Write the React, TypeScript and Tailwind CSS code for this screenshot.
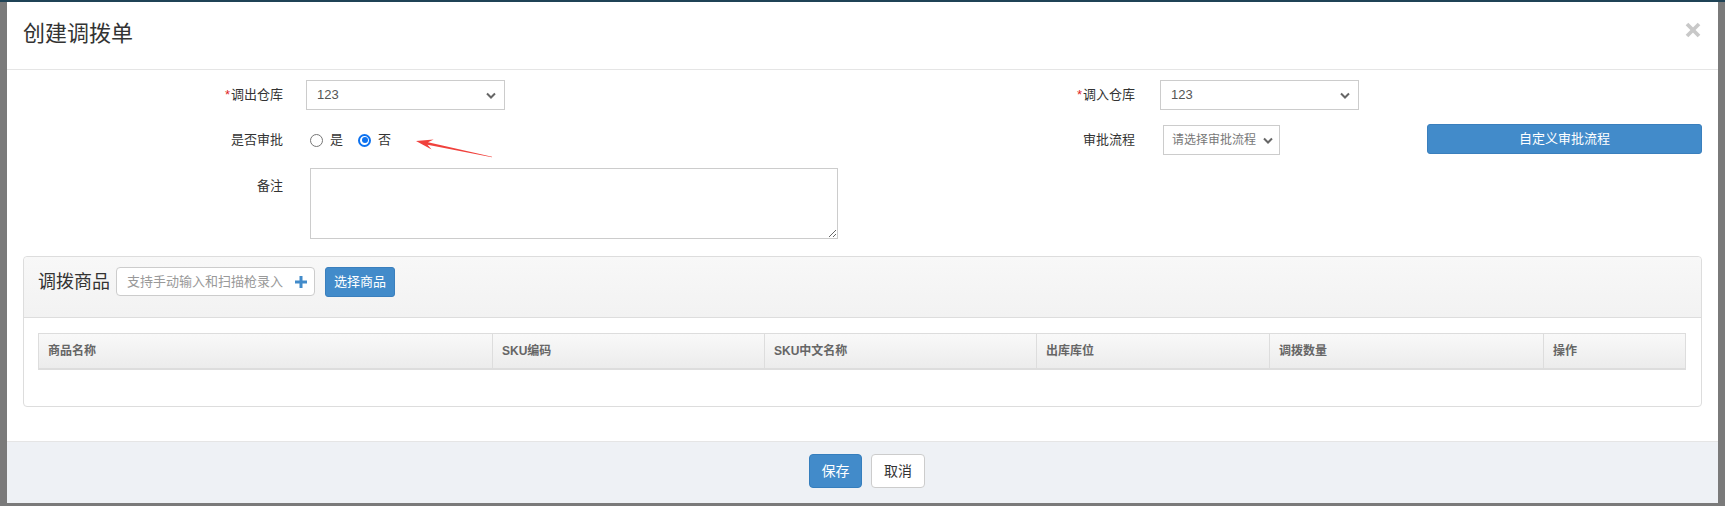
import React from "react";

function Chevron() {
  return (
    <svg width="10" height="7" viewBox="0 0 10 7" className="shrink-0">
      <polyline points="1,1.5 5,5.5 9,1.5" fill="none" stroke="#666" strokeWidth="2" />
    </svg>
  );
}

function Radio({ checked }: { checked?: boolean }) {
  if (checked) {
    return (
      <span className="w-[13px] h-[13px] rounded-full border-[2px] border-[#0d72f0] bg-white flex items-center justify-center shrink-0">
        <span className="w-[6px] h-[6px] rounded-full bg-[#0d72f0]" />
      </span>
    );
  }
  return <span className="w-[13px] h-[13px] rounded-full border border-[#767676] bg-white shrink-0" />;
}

const cols = ["商品名称", "SKU编码", "SKU中文名称", "出库库位", "调拨数量", "操作"];

export default function App() {
  return (
    <div className="relative w-[1725px] h-[506px] overflow-hidden bg-[#7a7a7a] font-['Liberation_Sans','Noto_Sans_CJK_SC',sans-serif] text-[#333]">
      <div className="h-[2px] bg-[#1f4356]" />
      <div className="flex">
        <div className="w-[7px] shrink-0" />
        <div className="w-[1711px] h-[501px] bg-white flex flex-col shrink-0">
          {/* header */}
          <div className="h-[68px] shrink-0 border-b border-[#e5e5e5] flex items-start justify-between pt-[21px] pl-[16px] pr-[17px]">
            <span className="text-[22px] leading-[22px]">创建调拨单</span>
            <svg width="16" height="16" viewBox="0 0 16 16" className="-mt-[1px]">
              <line x1="2" y1="2" x2="14" y2="14" stroke="#c8c8c8" strokeWidth="3.8" />
              <line x1="14" y1="2" x2="2" y2="14" stroke="#c8c8c8" strokeWidth="3.8" />
            </svg>
          </div>

          {/* body */}
          <div className="flex-1 px-[16px] pt-[10px] text-[13px]">
            {/* row 1 */}
            <div className="grid grid-cols-[852px_1fr] h-[30px]">
              <div className="flex items-center">
                <div className="w-[260px] text-right leading-[20px]">
                  <span className="text-[#e02424] mr-[1px]">*</span>调出仓库
                </div>
                <div className="ml-[23px] w-[199px] h-[30px] border border-[#ccc] flex items-center justify-between pl-[10px] pr-[8px] text-[#555]">
                  <span>123</span>
                  <Chevron />
                </div>
              </div>
              <div className="flex items-center">
                <div className="w-[260px] text-right leading-[20px]">
                  <span className="text-[#e02424] mr-[1px]">*</span>调入仓库
                </div>
                <div className="ml-[25px] w-[199px] h-[30px] border border-[#ccc] flex items-center justify-between pl-[10px] pr-[8px] text-[#555]">
                  <span>123</span>
                  <Chevron />
                </div>
              </div>
            </div>

            {/* row 2 */}
            <div className="grid grid-cols-[852px_1fr] h-[30px] mt-[15px]">
              <div className="flex items-center">
                <div className="w-[260px] text-right leading-[20px]">是否审批</div>
                <div className="ml-[27px] flex items-center">
                  <Radio />
                  <span className="ml-[7px]">是</span>
                  <span className="ml-[15px]" />
                  <Radio checked />
                  <span className="ml-[7px]">否</span>
                </div>
              </div>
              <div className="flex items-center">
                <div className="w-[260px] text-right leading-[20px]">审批流程</div>
                <div className="ml-[28px] w-[117px] h-[30px] border border-[#ccc] flex items-center justify-between pl-[8px] pr-[6px] text-[#777] text-[12px]">
                  <span>请选择审批流程</span>
                  <Chevron />
                </div>
                <button className="ml-auto -mt-[3px] w-[275px] h-[30px] bg-[#428bca] border border-[#3a7fbd] rounded-[3px] text-white text-[13px]">
                  自定义审批流程
                </button>
              </div>
            </div>

            {/* row 3 */}
            <div className="flex mt-[13px]">
              <div className="w-[260px] text-right leading-[20px] pt-[8px]">备注</div>
              <textarea className="ml-[27px] w-[528px] h-[71px] border border-[#ccc] outline-none" />
            </div>

            {/* panel */}
            <div className="mt-[17px] border border-[#ddd] rounded-[4px]">
              <div className="h-[61px] border-b border-[#ddd] bg-gradient-to-b from-[#f8f8f8] to-[#f2f2f2] rounded-t-[4px] flex items-start pt-[10px] pl-[14px]">
                <span className="text-[18px] leading-[30px] w-[72px]">调拨商品</span>
                <div className="ml-[6px] w-[199px] h-[29px] border border-[#ccc] rounded-[4px] bg-white flex items-center justify-between pl-[10px] pr-[7px]">
                  <span className="text-[#999] text-[13px]">支持手动输入和扫描枪录入</span>
                  <svg width="12" height="12" viewBox="0 0 12 12">
                    <rect x="4.5" y="0" width="3" height="12" fill="#428bca" />
                    <rect x="0" y="4.5" width="12" height="3" fill="#428bca" />
                  </svg>
                </div>
                <button className="ml-[10px] w-[70px] h-[30px] bg-[#428bca] border border-[#3a7fbd] rounded-[3px] text-white text-[13px]">
                  选择商品
                </button>
              </div>
              <div className="pl-[14px] pr-[15px] pt-[15px] pb-[36px]">
                <div className="grid grid-cols-[453px_272px_272px_233px_274px_1fr] h-[37px] border border-[#ddd] border-b-[2px] bg-gradient-to-b from-[#f9f9f9] to-[#ececec]">
                  {cols.map((c, i) => (
                    <div
                      key={c}
                      className={
                        i === 0
                          ? "flex items-center pl-[9px] text-[12px] font-bold text-[#666]"
                          : "flex items-center pl-[9px] text-[12px] font-bold text-[#666] border-l border-[#ddd]"
                      }
                    >
                      {c}
                    </div>
                  ))}
                </div>
              </div>
            </div>
          </div>

          {/* footer */}
          <div className="h-[62px] shrink-0 border-t border-[#e5e5e5] bg-[#eef1f5] flex justify-center items-start pt-[12px] pl-[9px] gap-[9px]">
            <button className="w-[53px] h-[34px] bg-[#428bca] border border-[#357ebd] rounded-[4px] text-white text-[14px]">
              保存
            </button>
            <button className="w-[54px] h-[34px] bg-white border border-[#ccc] rounded-[4px] text-[#333] text-[14px]">
              取消
            </button>
          </div>
        </div>
      </div>

      {/* red annotation arrow */}
      <svg className="absolute left-[410px] top-[134px]" width="90" height="28" viewBox="0 0 90 28">
        <path
          d="M6 7 L23.66 5.61 L17.99 8.3 L82.06 22.71 L81.94 23.29 L17.49 10.64 L21.6 15.39 Z"
          fill="#f0413c"
        />
      </svg>
    </div>
  );
}
